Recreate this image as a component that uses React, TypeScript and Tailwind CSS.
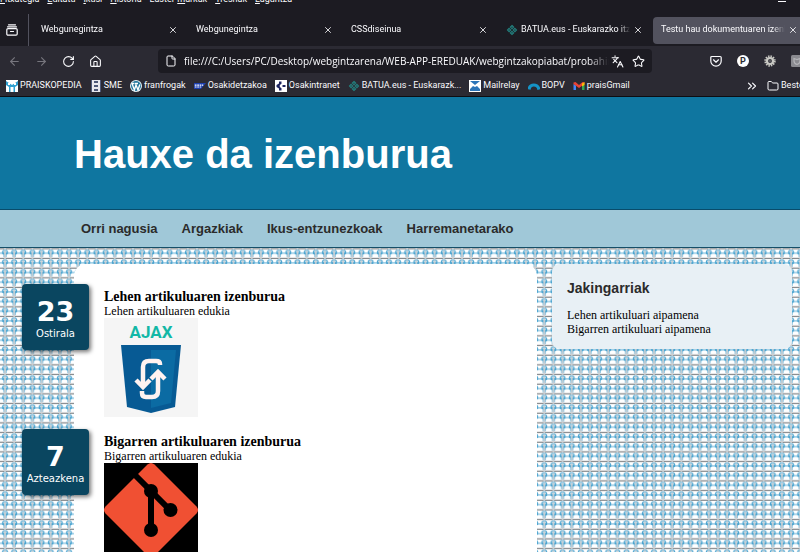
import type { ReactNode } from "react";
import { X, ArrowLeft, ArrowRight, RotateCw, House, File, Languages, Star, Folder, ChevronsRight } from "lucide-react";

const menuItems = [
  { before: "", key: "F", after: "itxategia" },
  { before: "", key: "E", after: "ditatu" },
  { before: "", key: "I", after: "kusi" },
  { before: "", key: "H", after: "istoria" },
  { before: "Laster-", key: "m", after: "arkak" },
  { before: "", key: "T", after: "resnak" },
  { before: "", key: "L", after: "aguntza" },
];

function BatuaIcon() {
  return (
    <svg viewBox="0 0 12 12" className="size-3 shrink-0" fill="none" stroke="#22817f" strokeWidth="1.1" aria-hidden="true">
      <path d="M6 1.500l1.600 1.600L6 4.700 4.400 3.100zM6 7.300l1.600 1.600L6 10.500 4.400 8.900zM3.100 4.400L4.700 6 3.100 7.600 1.500 6zM8.900 4.400L10.500 6 8.900 7.600 7.300 6z" />
    </svg>
  );
}

function PraisIcon() {
  return (
    <svg viewBox="0 0 12 12" className="size-3 shrink-0" aria-hidden="true">
      <path fill="#fff" d="M0 0h12v12H0z" />
      <path fill="#2e9fd0" d="M0 1l3 2 3 2 3-2 3-2v4L9 7v5H7.500V7h-3v5H3V7L0 5z" />
      <path fill="#fff" d="M2 3h2v2H2zM8 3h2v2H8z" />
    </svg>
  );
}

function SmeIcon() {
  return (
    <svg viewBox="0 0 12 12" className="size-3 shrink-0" aria-hidden="true">
      <path fill="#e8e8ee" d="M2 0h8v12H2z" />
      <path fill="#4d5878" d="M4 1h4v2H4zM4 5h4v2H4zM4 9h4v2H4zM1 0h1v12H1zM10 0h1v12h-1z" />
    </svg>
  );
}

function WordpressIcon() {
  return (
    <svg viewBox="0 0 12 12" className="size-3 shrink-0" fill="none" aria-hidden="true">
      <circle cx="6" cy="6" r="6" fill="#e6f2f8" />
      <circle cx="6" cy="6" r="5" fill="#22759b" />
      <path stroke="#fff" strokeWidth="1.300" d="M2 3.500L4.400 10 6 5l2 5 1.800-5.500M1.500 3.500h3M5 3.500h3" />
    </svg>
  );
}

function SapIcon() {
  return (
    <svg viewBox="0 0 12 12" className="size-3 shrink-0" aria-hidden="true">
      <path fill="#1c3fae" d="M0 3h12L7 9H0z" />
      <path stroke="#fff" strokeWidth="1.200" strokeDasharray="1.800 .6" d="M.8 5.200h8.400M.8 7h6.400" />
    </svg>
  );
}

function IntranetIcon() {
  return (
    <svg viewBox="0 0 12 12" className="size-3 shrink-0" aria-hidden="true">
      <path fill="#fff" d="M0 0h12v12H0z" />
      <path fill="#1d2460" d="M4 1.500h2.500v2.300L4.800 5v2l1.700 1.200v2.300H4V8.500L1.500 7V5L4 3.500zM7.500 5h3v2h-3z" />
    </svg>
  );
}

function MailrelayIcon() {
  return (
    <svg viewBox="0 0 12 12" className="size-3 shrink-0" aria-hidden="true">
      <path fill="#fff" d="M0 0h12v12H0z" />
      <path fill="#2a74b8" d="M1 1h10L6 5zM1 11V9l3-3 2 1 2-1 3 3v2z" />
    </svg>
  );
}

function BopvIcon() {
  return (
    <svg viewBox="0 0 12 12" className="size-3 shrink-0" fill="none" aria-hidden="true">
      <path stroke="#1593c6" strokeWidth="3.200" d="M1 9.500C2 3.500 9.500 3.500 11 9.500" />
    </svg>
  );
}

function GmailIcon() {
  return (
    <svg viewBox="0 0 12 12" className="size-3 shrink-0" aria-hidden="true">
      <path fill="#4285f4" d="M.5 4l2.500 1.500V10H.5z" />
      <path fill="#34a853" d="M11.500 4L9 5.500V10h2.500z" />
      <path fill="#ea4335" d="M.5 2.500L2.500 2 6 5l3.500-3 2 .5V4L6 8 .5 4z" />
      <path fill="#fbbc04" d="M9 3.500l2.500-1.500V5L9 6.500z" />
    </svg>
  );
}

function ArchiveIcon() {
  return (
    <svg viewBox="0 0 12 12" className="size-3" fill="none" stroke="#fbfbfe" strokeWidth="1.200" strokeLinecap="round" aria-hidden="true">
      <path d="M2.500.8h7M1.500 2.800h9" />
      <rect x="0.800" y="4.600" width="10.400" height="6.600" rx="1.200" />
      <path d="M4.500 7.500h3" />
    </svg>
  );
}

function PocketIcon() {
  return (
    <svg viewBox="0 0 12 12" className="size-3" fill="none" stroke="#fbfbfe" strokeWidth="1.200" strokeLinecap="round" strokeLinejoin="round" aria-hidden="true">
      <path d="M1.800 1.500h8.400a1 1 0 0 1 1 1V6a5.200 5.200 0 0 1-10.400 0V2.500a1 1 0 0 1 1-1zM3.500 4.800L6 7.200l2.500-2.400" />
    </svg>
  );
}

function GearIcon() {
  return (
    <svg viewBox="0 0 12 12" className="size-3" aria-hidden="true">
      <circle cx="6" cy="6" r="4.600" fill="none" stroke="#c9c9c4" strokeWidth="2.200" strokeDasharray="1.400 1" />
      <circle cx="6" cy="6" r="3" fill="none" stroke="#c9c9c4" strokeWidth="2.200" />
      <circle cx="6" cy="6" r="1.400" fill="#55555a" />
    </svg>
  );
}

function ShieldIcon() {
  return (
    <svg viewBox="0 0 12 12" className="size-3" aria-hidden="true">
      <rect width="12" height="12" rx="1.500" fill="#8a8a90" />
      <path fill="none" stroke="#b4b4b8" strokeWidth="1.200" d="M3 3.500l3 1 3-1v2.500q0 2.500-3 3.500-3-1-3-3.500z" />
    </svg>
  );
}

function AjaxLogo() {
  return (
    <svg viewBox="0 0 94 99" className="h-[99px] w-[94px]">
      <path fill="#f5f5f5" d="M0 0h94v99H0z" />
      <text x="47" y="20" textAnchor="middle" fill="#12b8a6" className="font-['Liberation_Sans_Narrow',Roboto,sans-serif] text-[17px] font-bold">
        AJAX
      </text>
      <path fill="#075a94" d="M17 27h60l-6 62-24 6-24-6z" />
      <path fill="#0b6ba3" d="M47 32h25l-5 53-20 5z" />
      <g fill="none" stroke="#fff2f0" strokeWidth="4.500">
        <path d="M56 47v-1q0-3-4-3h-7q-6 0-6 6v18M38 73v2q0 4 4 4h6q6 0 6-6V56" />
        <path d="M32 62l7 7 7-7M47 61l7-7 7 7" />
      </g>
    </svg>
  );
}

function GitLogo() {
  return (
    <svg viewBox="0 0 94 94" className="size-[94px]" role="img" aria-label="Git">
      <path fill="#000" d="M0 0h94v94H0z" />
      <path fill="#f05033" d="M43.500 1.500q3.500-3 7 0l42 42q3 3.500 0 7l-42 42q-3.500 3-7 0l-42-42q-3-3.500 0-7z" />
      <g fill="none" stroke="#000" strokeWidth="6">
        <path d="M31 12l35 35M47 28v40" />
      </g>
      <circle cx="47" cy="28" r="7" />
      <circle cx="66.500" cy="47" r="7" />
      <circle cx="47" cy="67" r="7" />
    </svg>
  );
}

function Weave() {
  return (
    <svg className="absolute inset-0 -z-10 size-full" aria-hidden="true">
      <defs>
        <pattern id="weave" width="9.140" height="9.670" patternUnits="userSpaceOnUse" x="0.430" y="1.400">
          <path fill="#fff" d="M0 0h9.140v9.670H0z" />
          <path fill="#7d8184" d="M0 8.500h9.140v1.170H0z" />
          <path fill="#62b1d8" d="M0 3.300h9.140v1H0z" />
          <path fill="#4aa3cf" d="M3 .4h3.200l1.300 1.500v2.700l-1.500.6v2.600H3.200V5.200l-1.500-.6V1.900z" />
          <path fill="#d4e6f0" d="M3 1.500h3.200v1.600H3z" />
          <path fill="#cfd2d4" d="M3.800 1.500h1.600v8.100H3.800z" />
        </pattern>
      </defs>
      <rect width="100%" height="100%" fill="url(#weave)" />
    </svg>
  );
}

function Tab({ title, icon, active = false }: { title: string; icon?: ReactNode; active?: boolean }) {
  return (
    <div className={`flex h-[27px] w-[155px] shrink-0 items-center gap-[3px] rounded pr-[10px] pl-2 ${active ? "bg-[#52525e]" : ""}`}>
      {icon}
      <button
        role="tab"
        aria-selected={active}
        className="min-w-0 flex-1 overflow-hidden mask-r-from-90% text-left whitespace-nowrap"
      >
        {title}
      </button>
      <button aria-label="Itxi" className="shrink-0">
        <X className="size-[10px]" />
      </button>
    </div>
  );
}

const bookmarks = [
  { name: "PRAISKOPEDIA", icon: <PraisIcon /> },
  { name: "SME", icon: <SmeIcon /> },
  { name: "franfrogak", icon: <WordpressIcon /> },
  { name: "Osakidetzakoa", icon: <SapIcon /> },
  { name: "Osakintranet", icon: <IntranetIcon /> },
  { name: "BATUA.eus - Euskarazk...", icon: <BatuaIcon /> },
  { name: "Mailrelay", icon: <MailrelayIcon /> },
  { name: "BOPV", icon: <BopvIcon /> },
  { name: "praisGmail", icon: <GmailIcon /> },
];

function Article({ day, weekday, title, body, children }: { day: string; weekday: string; title: string; body: string; children: ReactNode }) {
  return (
    <article className="-ml-[52px] flex items-start gap-[15px]">
      <time className="flex h-[66px] w-[67px] shrink-0 flex-col items-center justify-center rounded bg-[#0a4660] pt-1 font-['DejaVu_Sans',sans-serif] text-white shadow-[2px_2px_4px_#0008]">
        <strong className="text-[27px] leading-[30px]">{day}</strong>
        <span className="text-[10px] leading-[14px]">{weekday}</span>
      </time>
      <div className="pt-[5px]">
        <h2 className="text-[14px] leading-[15px] font-bold">{title}</h2>
        <p className="text-[12px] leading-[14px]">{body}</p>
        {children}
      </div>
    </article>
  );
}

export default function App() {
  return (
    <div className="h-screen overflow-hidden bg-white">
      <header className="bg-[#2b2a33] font-[Roboto,sans-serif] text-[9px] text-[#fbfbfe]">
        <div className="flex h-[14px] items-start justify-between overflow-hidden bg-[#1c1b22] pr-[14px]">
          <nav className="-mt-2 flex gap-2 leading-[14px]">
            {menuItems.map((m) => (
              <button key={m.key}>
                {m.before}
                <u>{m.key}</u>
                {m.after}
              </button>
            ))}
          </nav>
          <button aria-label="Minimizatu" className="mt-px h-px w-2 bg-[#fbfbfe]" />
        </div>
        <div className="flex h-8 items-center overflow-hidden bg-[#1c1b22]">
          <button aria-label="Fitxak" className="flex h-full w-7 shrink-0 items-center pl-[6px]">
            <ArchiveIcon />
          </button>
          <div role="tablist" className="flex h-full items-center border-l border-[#52525e] pl-1">
            <Tab title="Webgunegintza" />
            <Tab title="Webgunegintza" />
            <Tab title="CSSdiseinua" />
            <Tab title="BATUA.eus - Euskarazko itzultzailea" icon={<BatuaIcon />} />
            <Tab title="Testu hau dokumentuaren izenburua da" active />
          </div>
        </div>
        <div className="flex h-[30px] items-center justify-between overflow-hidden pl-2">
          <div className="flex w-[150px] shrink-0 gap-[14px]">
            <button aria-label="Atzera"><ArrowLeft className="size-[13px] text-[#77767e]" /></button>
            <button aria-label="Aurrera"><ArrowRight className="size-[13px] text-[#77767e]" /></button>
            <button aria-label="Berritu"><RotateCw className="size-[13px]" /></button>
            <button aria-label="Etxea"><House className="size-[13px]" /></button>
          </div>
          <div className="flex h-6 min-w-0 flex-1 items-center rounded bg-[#1c1b22] px-[7px]">
            <File className="mr-[7px] size-3 shrink-0" />
            <input
              aria-label="Helbidea"
              className="min-w-0 flex-1 bg-transparent mask-r-from-95% font-['Open_Sans',sans-serif] text-[10px] outline-none"
              defaultValue="file:///C:/Users/PC/Desktop/webgintzarena/WEB-APP-EREDUAK/webgintzakopiabat/probahiru.html"
            />
            <button aria-label="Itzuli" className="mr-2 ml-[2px]"><Languages className="size-[13px]" /></button>
            <button aria-label="Laster-marka"><Star className="size-[13px]" /></button>
          </div>
          <div className="ml-[58px] flex w-[90px] shrink-0 items-center gap-[15px] overflow-hidden">
            <button aria-label="Pocket" className="shrink-0"><PocketIcon /></button>
            <button className="size-3 shrink-0 rounded-full bg-white text-[9px] leading-3 font-bold text-[#2b2a33]">P</button>
            <button aria-label="Ezarpenak" className="shrink-0"><GearIcon /></button>
            <button aria-label="Babesa" className="shrink-0"><ShieldIcon /></button>
          </div>
        </div>
        <div className="flex h-[21px] items-center justify-between overflow-hidden border-b border-[#0e0d12] pl-[6px] whitespace-nowrap">
          <nav className="flex gap-2">
            {bookmarks.map((b) => (
              <a key={b.name} href="#" className="flex items-center gap-[2px]">
                {b.icon}
                {b.name}
              </a>
            ))}
          </nav>
          <div className="flex w-[55px] shrink-0 items-center gap-2 overflow-hidden">
            <button aria-label="Gehiago" className="shrink-0"><ChevronsRight className="size-[14px]" /></button>
            <a href="#" className="flex items-center gap-[2px]">
              <Folder className="size-3 shrink-0" />
              Beste laster-markak
            </a>
          </div>
        </div>
      </header>

      <div className="border-b border-[#084c6b] bg-[#0f76a0] px-[74px] pt-[34px] pb-[32px]">
        <h1 className="font-['Liberation_Sans',sans-serif] text-[40px] leading-[46px] font-bold text-white">Hauxe da izenburua</h1>
      </div>
      <nav className="flex h-[38px] items-center gap-6 border-b border-[#164f68] bg-[#a0c8d8] px-[81px] font-['Liberation_Sans',sans-serif] text-[13px] font-bold text-[#2b2b2b]">
        <a href="#">Orri nagusia</a>
        <a href="#">Argazkiak</a>
        <a href="#">Ikus-entzunezkoak</a>
        <a href="#">Harremanetarako</a>
      </nav>

      <div className="relative isolate flex items-start gap-[15px] pt-4 pr-2 pl-[74px] font-['Liberation_Serif',serif] text-black">
        <Weave />
        <main className="min-w-0 flex-1 space-y-3 rounded-t-xl bg-white pt-5 pb-10">
          <Article day="23" weekday="Ostirala" title="Lehen artikuluaren izenburua" body="Lehen artikuluaren edukia">
            <AjaxLogo />
          </Article>
          <Article day="7" weekday="Azteazkena" title="Bigarren artikuluaren izenburua" body="Bigarren artikuluaren edukia">
            <GitLogo />
          </Article>
        </main>
        <aside className="w-60 rounded-lg bg-[#e8f0f5] px-[15px] pt-4 pb-[13px] text-[12px] leading-[14px]">
          <h2 className="mb-3 font-['Liberation_Sans',sans-serif] text-[14px] leading-4 font-bold text-[#2b2b2b]">Jakingarriak</h2>
          <p>Lehen artikuluari aipamena</p>
          <p>Bigarren artikuluari aipamena</p>
        </aside>
      </div>
    </div>
  );
}
